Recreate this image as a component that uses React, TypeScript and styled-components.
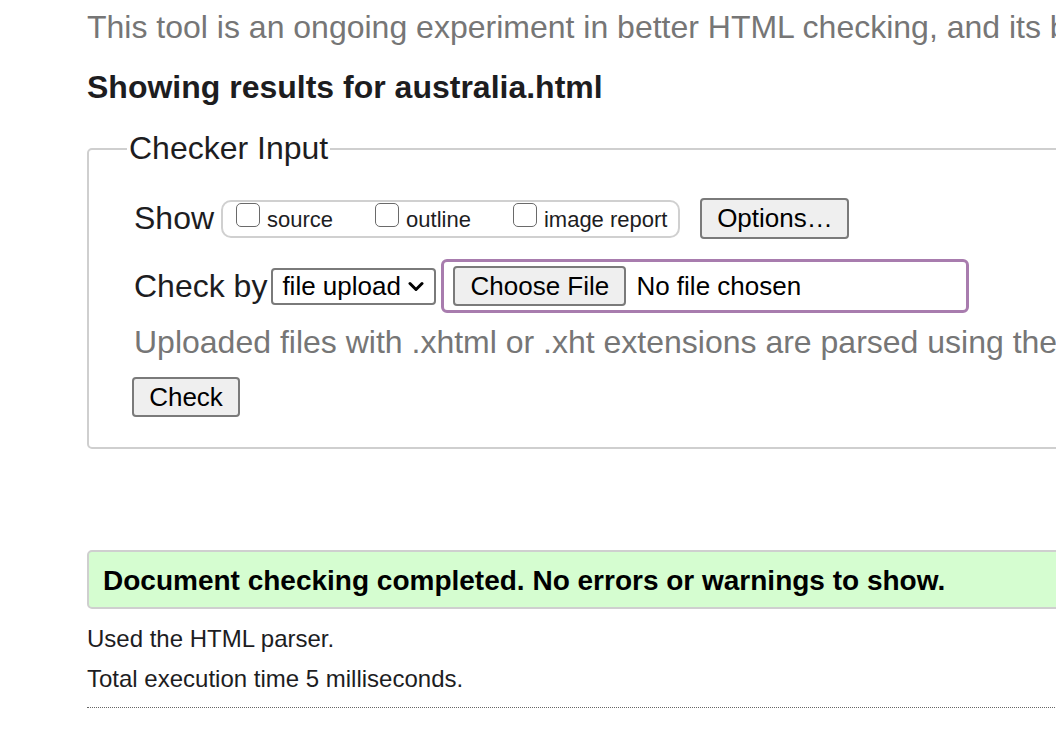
import React from "react";
import styled, { createGlobalStyle } from "styled-components";

const Global = createGlobalStyle`
  html, body {
    margin: 0;
    padding: 0;
    overflow: hidden;
    background: #fff;
  }
  body {
    font-family: "Liberation Sans", Arial, Helvetica, sans-serif;
    color: #222;
  }
`;

const Page = styled.main`
  width: 1400px;
  padding: 9px 0 0 87px;
  box-sizing: border-box;
`;

const Intro = styled.p`
  margin: 0;
  font-size: 32px;
  line-height: 37px;
  color: #767676;
  white-space: nowrap;
`;

const Heading = styled.h2`
  margin: 23px 0 0;
  font-size: 32px;
  line-height: 37px;
  font-weight: bold;
  color: #1d1d1f;
`;

const Fieldset = styled.fieldset`
  margin: 24px 0 0;
  width: 1200px;
  box-sizing: border-box;
  border: 2px solid #cfcfcf;
  border-radius: 5px;
  padding: 31px 0 30px 45px;
`;

const Legend = styled.legend`
  margin-left: -7px;
  padding: 0 2px;
  font-size: 32px;
  line-height: 37px;
  color: #1d1d1f;
`;

const Row = styled.div<{ $top?: number }>`
  display: flex;
  align-items: center;
  margin-top: ${(p) => p.$top ?? 0}px;
`;

const Label = styled.span`
  font-size: 32px;
  line-height: 37px;
  color: #1d1d1f;
  white-space: nowrap;
`;

const CheckGroup = styled.div`
  display: flex;
  align-items: center;
  gap: 42px;
  height: 38px;
  box-sizing: border-box;
  border: 2px solid #d0d0d0;
  border-radius: 10px;
  padding: 0 11px 3px 13px;
  margin-left: 7px;
`;

const CheckItem = styled.label`
  display: flex;
  align-items: baseline;
  gap: 7px;
  font-size: 22px;
  line-height: 25px;
  color: #1d1d1f;
  white-space: nowrap;
`;

const Box = styled.span`
  display: inline-block;
  width: 24px;
  height: 24px;
  box-sizing: border-box;
  border: 1.5px solid #6a6a6a;
  border-radius: 5px;
  background: #fff;
  margin-bottom: 1px;
`;

const Button = styled.button<{ $w: number; $h: number; $left?: number }>`
  width: ${(p) => p.$w}px;
  height: ${(p) => p.$h}px;
  margin-left: ${(p) => p.$left ?? 0}px;
  box-sizing: border-box;
  padding: 0;
  font-family: "Liberation Sans", Arial, sans-serif;
  font-size: 26px;
  color: #000;
  background: #efefef;
  border: 2px solid #7a7a7a;
  border-radius: 4px;
  flex: none;
`;

const Select = styled.div`
  display: flex;
  align-items: center;
  justify-content: space-between;
  width: 165px;
  height: 37px;
  box-sizing: border-box;
  border: 2px solid #7a7a7a;
  border-radius: 4px;
  padding: 0 10px 0 9px;
  margin-left: 4px;
  font-size: 26px;
  color: #000;
  background: #fff;
`;

const FileBox = styled.div`
  display: flex;
  align-items: center;
  gap: 10px;
  width: 528px;
  height: 54px;
  box-sizing: border-box;
  border: 3px solid #a87cae;
  border-radius: 6px;
  padding: 0 9px;
  margin-left: 5px;
`;

const FileText = styled.span`
  font-size: 26px;
  color: #000;
  white-space: nowrap;
`;

const Help = styled.p`
  margin: 11px 0 0;
  font-size: 32px;
  line-height: 37px;
  color: #767676;
  white-space: nowrap;
`;

const CheckWrap = styled.div`
  margin: 16px 0 0 -2px;
`;

const Success = styled.div`
  margin-top: 101px;
  width: 1200px;
  box-sizing: border-box;
  border: 2px solid #cfcfcf;
  border-radius: 5px;
  background: #d5fdd0;
  padding: 13px 14px 10px;
  font-size: 28px;
  line-height: 32px;
  font-weight: bold;
  color: #000;
  white-space: nowrap;
`;

const Info = styled.p<{ $top: number }>`
  margin: ${(p) => p.$top}px 0 0;
  font-size: 24px;
  line-height: 28px;
  color: #1d1d1f;
`;

const Rule = styled.hr`
  margin: 14px 0 0;
  width: 1200px;
  border: none;
  border-top: 1px dotted #666;
  height: 0;
`;

const Chevron = () => (
  <svg width="16" height="11" viewBox="0 0 16 11" aria-hidden="true">
    <path d="M2 2.5 L8 8.5 L14 2.5" fill="none" stroke="#000" strokeWidth="3" strokeLinecap="round" strokeLinejoin="round" />
  </svg>
);

export default function App() {
  return (
    <>
      <Global />
      <Page>
        <Intro>This tool is an ongoing experiment in better HTML checking, and its behavior remains subject to change</Intro>
        <Heading>Showing results for australia.html</Heading>
        <Fieldset>
          <Legend>Checker Input</Legend>
          <Row>
            <Label>Show</Label>
            <CheckGroup>
              <CheckItem>
                <Box />
                source
              </CheckItem>
              <CheckItem>
                <Box />
                outline
              </CheckItem>
              <CheckItem>
                <Box />
                image report
              </CheckItem>
            </CheckGroup>
            <Button $w={149} $h={41} $left={20}>Options…</Button>
          </Row>
          <Row $top={20}>
            <Label>Check by</Label>
            <Select>
              <span>file upload</span>
              <Chevron />
            </Select>
            <FileBox>
              <Button $w={173} $h={40}>Choose File</Button>
              <FileText>No file chosen</FileText>
            </FileBox>
          </Row>
          <Help>Uploaded files with .xhtml or .xht extensions are parsed using the XML parser.</Help>
          <CheckWrap>
            <Button $w={108} $h={40}>Check</Button>
          </CheckWrap>
        </Fieldset>
        <Success>Document checking completed. No errors or warnings to show.</Success>
        <Info $top={16}>Used the HTML parser.</Info>
        <Info $top={12}>Total execution time 5 milliseconds.</Info>
        <Rule />
      </Page>
    </>
  );
}
